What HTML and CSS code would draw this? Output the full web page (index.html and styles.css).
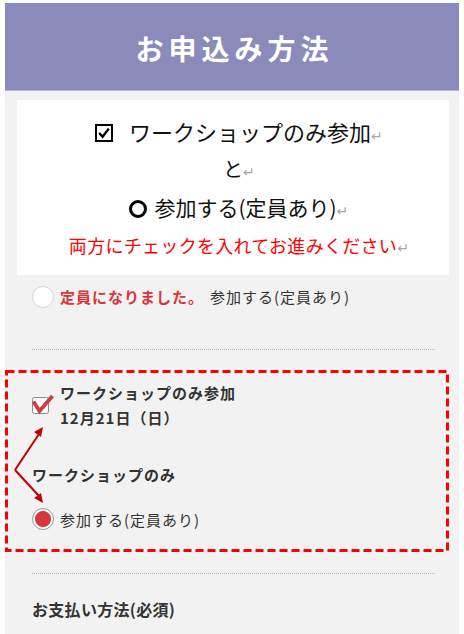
FILE: index.html
```html
<!DOCTYPE html>
<html lang="ja">
<head>
<meta charset="utf-8">
<link rel="stylesheet" href="styles.css">
</head>
<body>
<div class="page">
  <header class="hero"><h1 class="hero-title">お申込み方法</h1></header>
  <main class="content">
    <section class="notice">
      <p class="notice-line l1"><svg class="boxcheck" width="18" height="18" viewBox="0 0 18 18"><rect x="1" y="1" width="16" height="16" fill="none" stroke="#000" stroke-width="2"/><path d="M4.2 9 L7.6 12.8 L13.8 4.6" fill="none" stroke="#000" stroke-width="2.4"/></svg><span class="sp"></span>ワークショップのみ参加<span class="ret">↵</span></p>
      <p class="notice-line l2">と<span class="ret">↵</span></p>
      <p class="notice-line l3"><span class="ring"></span>参加する(定員あり)<span class="ret">↵</span></p>
      <p class="notice-line l4">両方にチェックを入れてお進みください<span class="ret">↵</span></p>
    </section>

    <div class="field field-full">
      <span class="radio"></span>
      <span class="full">定員になりました。</span><span class="opt">参加する(定員あり)</span>
    </div>

    <hr class="divider">

    <section class="annot">
      <svg class="frame" width="444" height="182"><rect x="1.5" y="1.5" width="441" height="179" fill="none" stroke="#ff0000" stroke-width="3" stroke-dasharray="8 4"/></svg>
      <svg class="arrows" width="50" height="182" viewBox="0 0 50 182">
        <path d="M10 100 L34 64 M10 100 L34 126" fill="none" stroke="#c00000" stroke-width="2"/>
        <path d="M38 57 L29 62 L36 67 Z" fill="#c00000"/>
        <path d="M38 133 L29 128 L36 123 Z" fill="#c00000"/>
      </svg>
      <div class="check-row">
        <svg class="chk" width="17" height="17" viewBox="0 0 17 17"><rect x="0.5" y="0.5" width="16" height="16" rx="2" fill="#fff" stroke="#8a8a8a"/><path d="M1.5 4.5 L7.5 14 L20.5 -1" fill="none" stroke="#d13a3f" stroke-width="3.8"/></svg>
        <div class="check-text">
          <div>ワークショップのみ参加</div>
          <div>12月21日（日）</div>
        </div>
      </div>
      <div class="group-label">ワークショップのみ</div>
      <div class="field field-on">
        <span class="radio on"></span>
        <span class="opt">参加する(定員あり)</span>
      </div>
    </section>

    <hr class="divider">

    <h2 class="pay">お支払い方法(必須)</h2>
  </main>
</div>
</body>
</html>
```
FILE: styles.css
```css
* { box-sizing: border-box; }
html, body { margin: 0; padding: 0; background: #fff; }
body { font-family: "Noto Sans CJK JP", "Noto Sans", sans-serif; color: #333; }

.page { margin-left: 5px; width: 454px; padding-top: 3px; }

.hero {
  height: 88px;
  background: #8a8bba;
  border-bottom: 1px solid #b5b6dc;
  display: flex; align-items: center; justify-content: center;
}
.hero-title {
  margin: 0; color: #fff; font-size: 28px; font-weight: 700;
  letter-spacing: 5px; padding-left: 5px; line-height: 1; padding-top: 2px;
}

.content { background: #f2f2f2; padding-top: 9px; min-height: 543px; }

.notice {
  background: #fff; margin: 0 10px 0 12px;
  padding: 12px 0 11px;
  color: #111;
}
.notice-line {
  margin: 0; text-align: center; line-height: 38px; height: 38px;
  white-space: nowrap; font-weight: 400;
}
.notice-line.l1 { font-size: 22px; }
.notice-line.l2 { font-size: 20px; }
.notice-line.l3 { font-size: 21px; }
.notice-line.l4 { font-size: 18px; color: #ff0000; letter-spacing: 0.3px; }
.ret {
  display: inline-block; width: 0; color: #a6a6a6;
  font-family: "DejaVu Sans", sans-serif; font-size: 14px; letter-spacing: 0;
}
.boxcheck { vertical-align: -1px; }
.sp { display: inline-block; width: 16px; }
.ring {
  display: inline-block; width: 18px; height: 18px; border: 3.5px solid #000;
  border-radius: 50%; vertical-align: -2px; margin-right: 7px;
}

.field { display: flex; align-items: center; margin-left: 27px; }
.field-full { margin-top: 10px; height: 23px; }
.radio {
  width: 22px; height: 22px; border-radius: 50%; background: #fff;
  border: 1px solid #d6d6d6; flex: none; margin-right: 6px;
}
.radio.on {
  border-color: #9a9a9a;
  background: radial-gradient(circle, #d6373d 7.5px, #fff 8.5px);
}
.full { color: #d8363b; font-weight: 700; font-size: 15px; letter-spacing: 1px; }
.opt { color: #333; font-size: 15px; letter-spacing: 1px; margin-left: 6px; }
.field-on .opt { margin-left: 0; }

.divider {
  border: 0; border-top: 1px dotted #b8b8b8; height: 0;
  margin: 41px 24px 0 27px;
}

.annot {
  position: relative; margin: 20px 10px 0 0; height: 182px;
  padding: 10px 0 0 27px;
}
.frame { position: absolute; left: 0; top: 0; }
.arrows { position: absolute; left: 0; top: 0; }

.check-row { display: flex; align-items: center; }
.chk { overflow: visible; flex: none; margin-right: 11px; }
.check-text { font-size: 15px; font-weight: 700; line-height: 25px; letter-spacing: 1px; color: #333; }

.group-label {
  font-size: 15px; font-weight: 700; letter-spacing: 1px; line-height: 25px;
  margin-top: 32px; color: #333;
}
.field-on { margin-left: 0; margin-top: 21px; }

.annot + .divider { margin-top: 21px; }

.pay {
  margin: 24px 0 0 27px; font-size: 16px; font-weight: 700; line-height: 22px;
  color: #333; letter-spacing: 0.3px;
}
```
